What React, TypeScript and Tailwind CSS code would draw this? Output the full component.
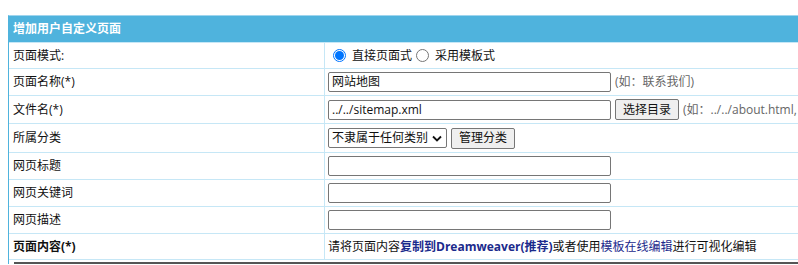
import React from 'react';

const font = { fontFamily: '"Open Sans", "Noto Sans CJK SC", sans-serif' };

function Row({
    label,
    bold,
    h,
    children,
}: {
    label: string;
    bold?: boolean;
    h: string;
    children?: React.ReactNode;
}) {
    return (
        <div className={`flex border-b border-[#c6e7f6] ${h}`}>
            <div
                className={`flex w-[316px] shrink-0 items-center border-r border-[#c6e7f6] pl-[4px] text-[12px] text-[#111] ${bold ? 'font-bold' : ''}`}
            >
                {label}
            </div>
            <div className="flex min-w-0 flex-1 items-center gap-[4px] pl-[3px] text-[12px] text-[#111]">
                {children}
            </div>
        </div>
    );
}

function TextInput({ value }: { value?: string }) {
    return (
        <div className="flex h-[20px] w-[283px] shrink-0 items-center rounded-[2px] border border-[#767676] bg-white px-[3px] text-[12px] text-[#111]">
            {value}
        </div>
    );
}

function Btn({ children }: { children: React.ReactNode }) {
    return (
        <div className="flex h-[21px] shrink-0 items-center whitespace-nowrap rounded-[2px] border border-[#767676] bg-[#efefef] px-[7px] text-[12px] text-[#111]">
            {children}
        </div>
    );
}

function Radio({ checked }: { checked?: boolean }) {
    return checked ? (
        <span className="flex h-[13px] w-[13px] items-center justify-center rounded-full border border-[#0075ff] bg-white">
            <span className="h-[9px] w-[9px] rounded-full bg-[#0075ff]" />
        </span>
    ) : (
        <span className="h-[13px] w-[13px] rounded-full border border-[#767676] bg-white" />
    );
}

export default function App() {
    return (
        <div className="h-[265px] w-[798px] overflow-hidden bg-white" style={font}>
            <div className="ml-[8px] mt-[15px] w-[900px] border-l border-t border-l-[#4fb3dd] border-t-[#9fd5ee]">
                {/* HEADER */}
                <div className="flex h-[27px] items-center border-b border-[#c6e7f6] bg-[#4fb3dd] pl-[4px] text-[12px] font-bold text-white">
                    增加用户自定义页面
                </div>

                <Row label="页面模式:" h="h-[26px]">
                    <div className="ml-[5px] flex items-center gap-[6px]">
                        <Radio checked />
                        <span>直接页面式</span>
                    </div>
                    <div className="flex items-center gap-[6px]">
                        <Radio />
                        <span>采用模板式</span>
                    </div>
                </Row>

                <Row label="页面名称(*)" h="h-[27px]">
                    <TextInput value="网站地图" />
                    <span className="text-[#666]">(如：联系我们)</span>
                </Row>

                <Row label="文件名(*)" h="h-[28px]">
                    <TextInput value="../../sitemap.xml" />
                    <Btn>选择目录</Btn>
                    <span className="whitespace-nowrap text-[#666]">(如：../../about.html,</span>
                </Row>

                <Row label="所属分类" h="h-[29px]">
                    <div className="flex h-[20px] w-[119px] shrink-0 items-center justify-between rounded-[2px] border border-[#767676] bg-white pl-[3px] pr-[4px]">
                        <span className="whitespace-nowrap">不隶属于任何类别</span>
                        <svg width="10" height="7" viewBox="0 0 10 7">
                            <path d="M1 1.5 L5 5.5 L9 1.5" stroke="#111" strokeWidth="1.8" fill="none" />
                        </svg>
                    </div>
                    <Btn>管理分类</Btn>
                </Row>

                <Row label="网页标题" h="h-[27px]">
                    <TextInput />
                </Row>

                <Row label="网页关键词" h="h-[27px]">
                    <TextInput />
                </Row>

                <Row label="网页描述" h="h-[27px]">
                    <TextInput />
                </Row>

                <Row label="页面内容(*)" bold h="h-[26px]">
                    <span className="whitespace-nowrap">
                        请将页面内容
                        <b className="text-[#1b2a8c]">复制到Dreamweaver(推荐)</b>
                        或者使用
                        <span className="text-[#1b2a8c]">模板在线编辑</span>
                        进行可视化编辑
                    </span>
                </Row>

                <div className="ml-[5px] mt-[2px] border-t-2 border-[#555]" />
            </div>
        </div>
    );
}
